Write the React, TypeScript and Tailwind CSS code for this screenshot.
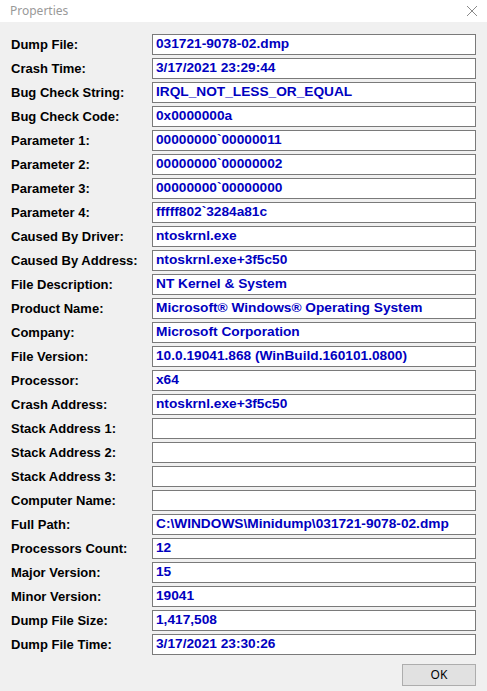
const rows: [string, string][] = [
  ["Dump File:", "031721-9078-02.dmp"],
  ["Crash Time:", "3/17/2021 23:29:44"],
  ["Bug Check String:", "IRQL_NOT_LESS_OR_EQUAL"],
  ["Bug Check Code:", "0x0000000a"],
  ["Parameter 1:", "00000000`00000011"],
  ["Parameter 2:", "00000000`00000002"],
  ["Parameter 3:", "00000000`00000000"],
  ["Parameter 4:", "fffff802`3284a81c"],
  ["Caused By Driver:", "ntoskrnl.exe"],
  ["Caused By Address:", "ntoskrnl.exe+3f5c50"],
  ["File Description:", "NT Kernel & System"],
  ["Product Name:", "Microsoft® Windows® Operating System"],
  ["Company:", "Microsoft Corporation"],
  ["File Version:", "10.0.19041.868 (WinBuild.160101.0800)"],
  ["Processor:", "x64"],
  ["Crash Address:", "ntoskrnl.exe+3f5c50"],
  ["Stack Address 1:", ""],
  ["Stack Address 2:", ""],
  ["Stack Address 3:", ""],
  ["Computer Name:", ""],
  ["Full Path:", "C:\\WINDOWS\\Minidump\\031721-9078-02.dmp"],
  ["Processors Count:", "12"],
  ["Major Version:", "15"],
  ["Minor Version:", "19041"],
  ["Dump File Size:", "1,417,508"],
  ["Dump File Time:", "3/17/2021 23:30:26"],
];

const App = () => {
  return (
    <div className="flex h-[691px] w-[487px] flex-col bg-[#f0f0f0] font-['Liberation_Sans',Arial,sans-serif]">
      <div className="flex h-[22px] items-center justify-between bg-white pl-[10px] pr-[9px]">
        <span className="font-['Noto_Sans',sans-serif] text-[12px] text-[#999999]">Properties</span>
        <svg width="12" height="12" viewBox="0 0 12 12">
          <path d="M1 1L11 11M11 1L1 11" stroke="#8a8a8a" strokeWidth="1" />
        </svg>
      </div>

      <div className="flex flex-col gap-[3px] pt-[12px]">
        {rows.map(([label, value]) => (
          <div key={label} className="flex h-[21px] items-center">
            <div className="w-[152px] pl-[11px] text-[13px] font-bold text-black">{label}</div>
            <div className="flex h-[21px] w-[324px] items-center border border-[#7a7a7a] bg-white pl-[3px] text-[13.7px] font-bold text-[#0000c0]">
              {value}
            </div>
          </div>
        ))}
      </div>

      <div className="mt-[9px] pl-[402px]">
        <button className="flex h-[22px] w-[74px] items-center justify-center border border-[#adadad] bg-[#e1e1e1] font-['Noto_Sans',sans-serif] text-[12px] text-black">
          OK
        </button>
      </div>
    </div>
  );
};

export default App;
